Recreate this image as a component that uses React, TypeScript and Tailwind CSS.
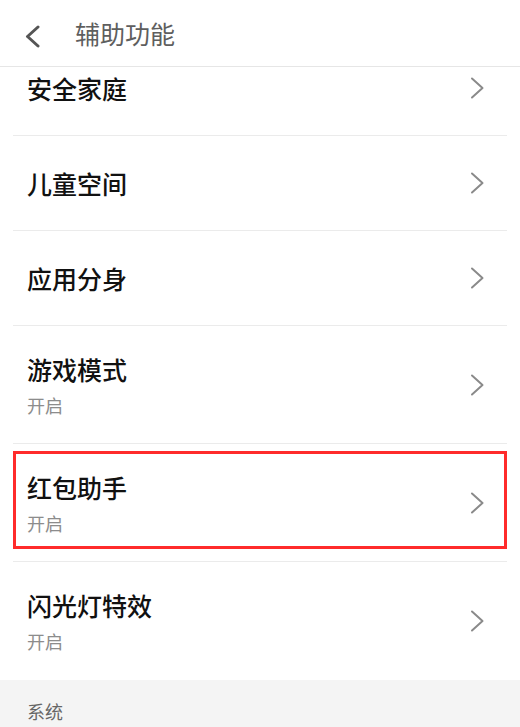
import React from "react";

const font = { fontFamily: '"Noto Sans CJK SC", "Noto Sans", sans-serif' };

function Chevron() {
  return (
    <svg width="15" height="22" viewBox="0 0 15 22" className="shrink-0">
      <path d="M2 1.5 L12.5 11 L2 20.5" fill="none" stroke="#8a8a8a" strokeWidth="2" strokeLinecap="round" strokeLinejoin="round" />
    </svg>
  );
}

type Item = { title: string; sub?: string; highlight?: boolean; first?: boolean };

const items: Item[] = [
  { title: "安全家庭", first: true },
  { title: "儿童空间" },
  { title: "应用分身" },
  { title: "游戏模式", sub: "开启" },
  { title: "红包助手", sub: "开启", highlight: true },
  { title: "闪光灯特效", sub: "开启" },
];

function Row({ item, last }: { item: Item; last: boolean }) {
  return (
    <div
      className={`relative flex items-center justify-between pl-[14px] pr-[22px] ${
        item.sub ? "h-[118px]" : "h-[95px]"
      } ${last ? "" : "border-b border-[#ebebeb]"} ${item.first ? "-mt-[26px]" : ""}`}
    >
      <div className="flex flex-col">
        <div className="text-[25px] leading-[32px] font-medium text-[#111]">{item.title}</div>
        {item.sub && <div className="mt-[8px] text-[18px] leading-[24px] text-[#8c8c8c]">{item.sub}</div>}
      </div>
      <Chevron />
      {item.highlight && (
        <div className="pointer-events-none absolute left-0 right-0 top-[7px] bottom-[12px] border-[3px] border-[#ff2b2b]" />
      )}
    </div>
  );
}

export default function App() {
  return (
    <div className="w-[520px] h-[727px] overflow-hidden bg-white flex flex-col" style={font}>
      <div className="relative z-10 h-[67px] shrink-0 bg-white border-b border-[#e6e6e6] flex items-center">
        <svg width="20" height="24" viewBox="0 0 20 24" className="ml-[23px] mt-[8px]">
          <path d="M15 2 L4.5 11.5 L15 21" fill="none" stroke="#555" strokeWidth="3" strokeLinecap="round" strokeLinejoin="round" />
        </svg>
        <div className="ml-[32px] mt-[2px] text-[25px] text-[#5e5e5e]">辅助功能</div>
      </div>
      <div className="flex-1 overflow-hidden">
        <div className="px-[13px]">
          {items.map((it, i) => (
            <Row key={it.title} item={it} last={i === items.length - 1} />
          ))}
        </div>
        <div className="h-[60px] bg-[#f4f4f4] pl-[27px] pt-[18px] text-[18px] leading-[26px] text-[#666]">系统</div>
      </div>
    </div>
  );
}
